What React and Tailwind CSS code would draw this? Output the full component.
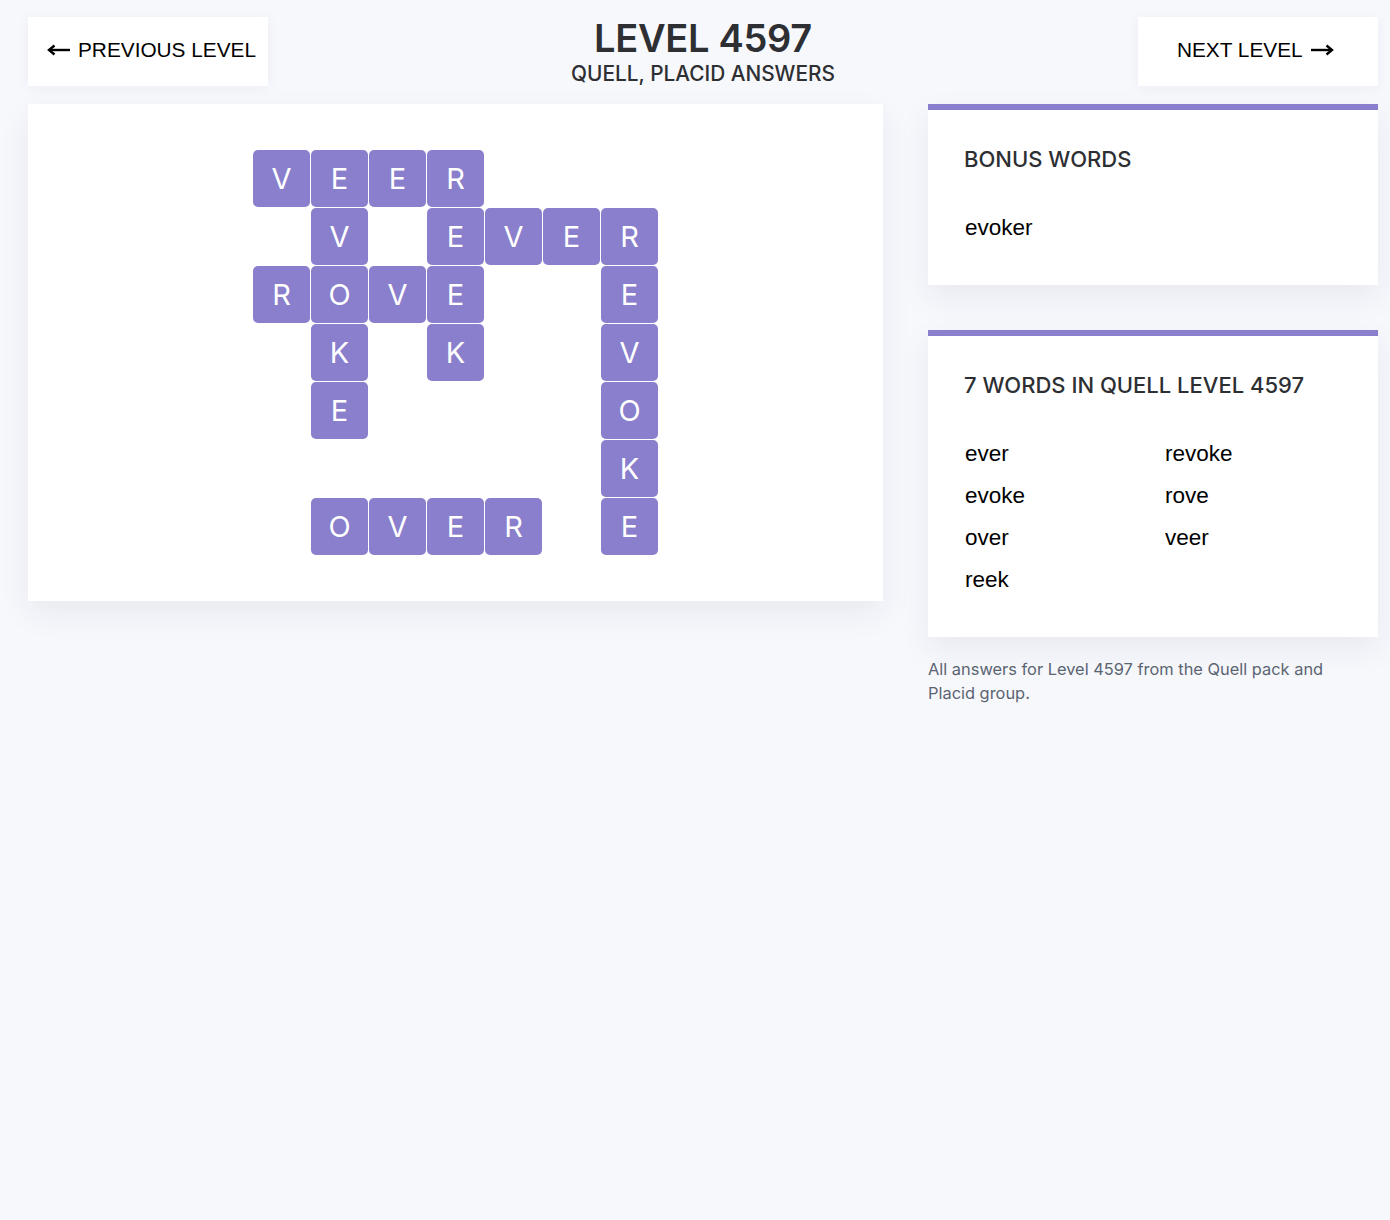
import React from "react";

const GRID = [
  "VEER...",
  ".V.EVER",
  "ROVE..E",
  ".K.K..V",
  ".E....O",
  "......K",
  ".OVER.E",
];

const ArrowLeft = () => (
  <svg width="24" height="12" viewBox="0 0 24 12" className="shrink-0">
    <path d="M3 6 H23" stroke="#000" strokeWidth="2.4" />
    <path d="M7.5 1.5 L2 6 L7.5 10.5" stroke="#000" strokeWidth="2.4" fill="none" />
  </svg>
);

const ArrowRight = () => (
  <svg width="24" height="12" viewBox="0 0 24 12" className="shrink-0">
    <path d="M1 6 H21" stroke="#000" strokeWidth="2.4" />
    <path d="M16.5 1.5 L22 6 L16.5 10.5" stroke="#000" strokeWidth="2.4" fill="none" />
  </svg>
);

function NavButton({ children, className = "" }) {
  return (
    <div className={`w-[240px] h-[69px] bg-white shadow-[0_2px_12px_rgba(30,40,80,0.05)] flex items-center gap-[7px] pb-[3px] text-black text-[20.8px] font-['Liberation_Sans',Arial,sans-serif] ${className}`}>
      {children}
    </div>
  );
}

function Card({ title, children }) {
  return (
    <div className="bg-white border-t-[6px] border-[#8a7fcc] shadow-[0_12px_30px_rgba(30,45,90,0.07)] px-9 pt-9 pb-9">
      <div className="text-[22px] leading-6 font-medium text-[#2d2f33] font-['Inter',sans-serif] pt-[1px]">{title}</div>
      <div className="mt-9">{children}</div>
    </div>
  );
}

export default function App() {
  const words = [["ever", "revoke"], ["evoke", "rove"], ["over", "veer"], ["reek", ""]];
  return (
    <div className="min-h-[1220px] bg-[#f7f8fc] pl-[28px] pr-[12px] pt-[17px]">
      <div className="flex items-start justify-between">
        <NavButton className="pl-[19px]">
          <ArrowLeft />
          <span>PREVIOUS LEVEL</span>
        </NavButton>
        <div className="flex flex-col items-center font-['Inter',sans-serif] text-[#2d2f33]">
          <div className="text-[38px] leading-[40px] font-semibold tracking-[-0.3px] mt-[1px]">LEVEL 4597</div>
          <div className="text-[20.8px] leading-6 font-medium mt-[4px]">QUELL, PLACID ANSWERS</div>
        </div>
        <NavButton className="pl-[39px]">
          <span>NEXT LEVEL</span>
          <ArrowRight />
        </NavButton>
      </div>

      <div className="flex items-start gap-[45px] mt-[18px]">
        <div className="w-[855px] bg-white shadow-[0_12px_30px_rgba(30,45,90,0.07)] pt-[46px] pb-[46px] flex justify-center">
          <div className="grid grid-cols-[repeat(7,57px)] grid-rows-[repeat(7,57px)] gap-[1px]">
            {GRID.flatMap((row, r) =>
              row.split("").map((ch, c) =>
                ch === "." ? (
                  <div key={`${r}-${c}`} />
                ) : (
                  <div
                    key={`${r}-${c}`}
                    className="rounded-[5px] bg-[#8a7fcc] flex items-center justify-center text-white text-[29px] font-['Inter',sans-serif]"
                  >
                    {ch}
                  </div>
                )
              )
            )}
          </div>
        </div>

        <div className="w-[450px] flex flex-col">
          <Card title="BONUS WORDS">
            <div className="text-[22.5px] leading-[42px] text-black font-['Liberation_Sans',Arial,sans-serif] pl-[1px]">evoker</div>
          </Card>
          <div className="mt-[45px]">
            <Card title="7 WORDS IN QUELL LEVEL 4597">
              <div className="grid grid-cols-[200px_1fr] text-[22.5px] leading-[42px] text-black font-['Liberation_Sans',Arial,sans-serif] pl-[1px]">
                {words.flatMap(([a, b], i) => [
                  <div key={`a${i}`}>{a}</div>,
                  <div key={`b${i}`}>{b}</div>,
                ])}
              </div>
            </Card>
          </div>
          <p className="mt-5 pr-10 text-[16.4px] leading-6 text-[#5b6472] font-['Inter',sans-serif]">
            All answers for Level 4597 from the Quell pack and Placid group.
          </p>
        </div>
      </div>
    </div>
  );
}
